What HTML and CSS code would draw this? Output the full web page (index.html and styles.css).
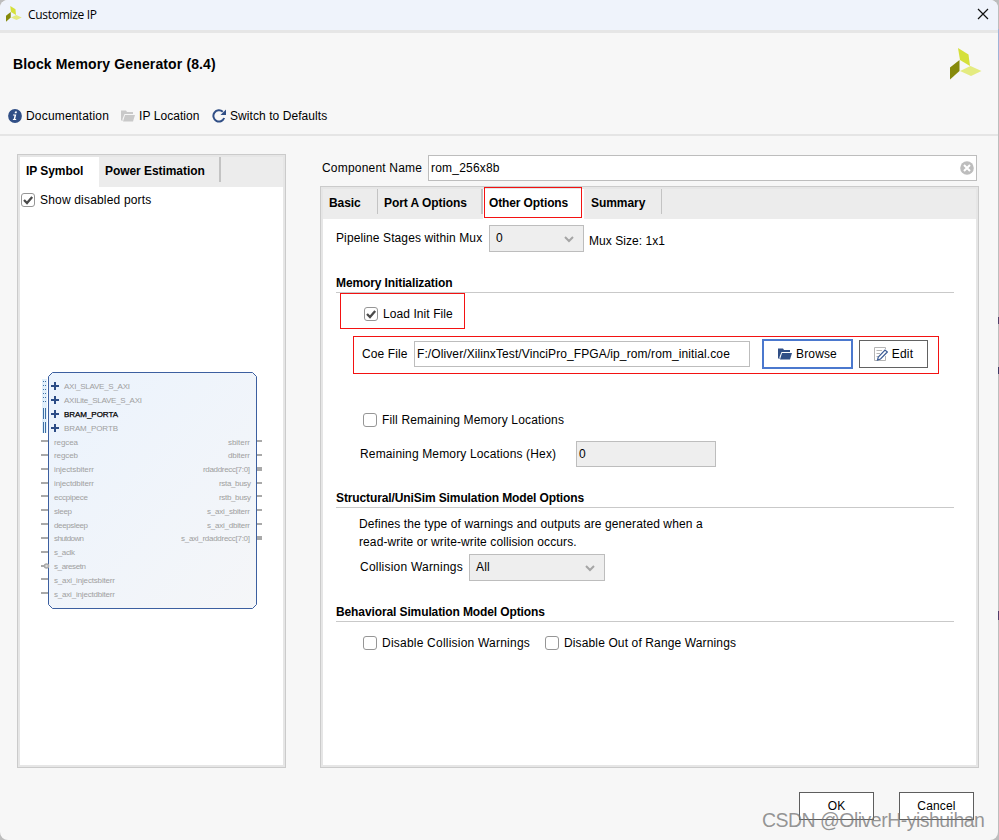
FILE: index.html
```html
<!DOCTYPE html>
<html lang="en">
<head>
<meta charset="utf-8">
<title>Customize IP</title>
<link rel="stylesheet" href="styles.css">
</head>
<body>
<div class="window">
  <header class="titlebar">
    <svg class="app-icon" viewBox="0 0 32 32"><path fill="#d5e03a" d="M8.500 0L19 6.500L20 18L10 12z"/><path fill="#868a0b" d="M0 19.500L9.500 12V23L0 31.500z"/><path fill="#e4eb80" d="M10 23L20.500 18L31.500 23L21 28z"/></svg>
    <span class="window-title">Customize IP</span>
    <svg class="close" viewBox="0 0 12 12"><path d="M1 1L11 11M11 1L1 11" stroke="#111" stroke-width="1.200" fill="none"/></svg>
  </header>
  <section class="head">
    <div class="head-top">
      <h1>Block Memory Generator (8.4)</h1>
      <svg class="logo" viewBox="0 0 32 32"><path fill="#d5e03a" d="M8 0L18.500 6.500L20 18L10 12z"/><path fill="#868a0b" d="M0 19.500L9.500 12V23L0 31.500z"/><path fill="#e4eb80" d="M10 23L20.500 18L31.500 23L21 28z"/></svg>
    </div>
    <nav class="toolbar">
      <svg class="t-info" viewBox="0 0 14 14"><circle cx="7" cy="7" r="6.900" fill="#314f86"/><path d="M7 2.500h2l-.4 1.800h-2zM5 5.500h3.300L7.200 10h1.100l-.2 1H4.800l.2-.9h.7l.8-3.600H4.900z" fill="#fff"/></svg>
      <span class="t-doc">Documentation</span>
      <svg class="t-folder" viewBox="0 0 14 12"><path fill="#c9c9c9" d="M0 .5h5l1 1.500h6v2H3.500L1.500 9V11H1L0 10zM4 5h10l-2 6.500H2z"/></svg>
      <span class="t-loc">IP Location</span>
      <svg class="t-reset" viewBox="0 0 14 14"><path d="M12.200 9A5.600 5.600 0 1 1 10.800 2.800" fill="none" stroke="#314f86" stroke-width="2"/><path fill="#314f86" d="M14 .5V6H8.500z"/></svg>
      <span>Switch to Defaults</span>
    </nav>
  </section>
  <main class="main">
    <aside class="panel side">
      <div class="tabs">
        <span class="tab side-active">IP Symbol</span><span class="tab power">Power Estimation</span>
      </div>
      <div class="show-ports"><span class="check"><svg viewBox="0 0 14 14"><path d="M3 7L6 10L11.200 4" fill="none" stroke="#4a4a4a" stroke-width="2.300"/></svg></span><span>Show disabled ports</span></div>
      <svg class="symbol" width="226" height="240" viewBox="38 370 226 240">
        <defs><linearGradient id="g" x1="0" y1="0" x2="1" y2="1"><stop offset="0" stop-color="#ebf3fd"/><stop offset="1" stop-color="#f5f6f8"/></linearGradient></defs>
        <path d="M52.500 372.500H252.500L256.500 376.500V604.500L252.500 608.500H52.500L48.500 604.500V376.500z" fill="url(#g)" stroke="#3c5fa0"/>
        <path fill="#e2f0fb" d="M42 379h5v28h-5zM42 407h5v26h-5z"/>
        <path d="M43.500 381V405M45.500 381V405" stroke="#3d6fa5" stroke-width="1" stroke-dasharray="1 3"/>
        <path d="M43.500 408V419M45.500 408V419M43.500 422V433M45.500 422V433" stroke="#3d6fa5"/>
        <path d="M51 386h8M55 382v8M51 400h8M55 396v8M51 414h8M55 410v8M51 428h8M55 424v8" stroke="#2d4d86" stroke-width="2"/>
        <path d="M41 441h7M41 455h7M41 469h7M41 483h7M41 496h7M41 510h7M41 524h7M41 538h7M41 552h7M41 566h7M41 579h7M41 593h7M257 441h5M257 455h5M257 483h5M257 496h5M257 510h5M257 524h5" stroke="#a9a9a9" stroke-width="2"/>
        <path d="M257 469h5M257 538h5" stroke="#a9a9a9" stroke-width="4"/>
        <circle cx="46.500" cy="566" r="2" fill="#ddd" stroke="#a9a9a9" stroke-width="1.500"/>
        <g class="ports">
          <text x="64" y="389" textLength="66">AXI_SLAVE_S_AXI</text><text x="64" y="403" textLength="78">AXILite_SLAVE_S_AXI</text>
          <text class="on" x="64" y="417" textLength="54">BRAM_PORTA</text><text x="64" y="431" textLength="54">BRAM_PORTB</text>
          <text x="54" y="445" textLength="24">regcea</text><text x="54" y="458" textLength="24">regceb</text>
          <text x="54" y="472" textLength="40">injectsbiterr</text><text x="54" y="486" textLength="40">injectdbiterr</text>
          <text x="54" y="500" textLength="34">eccpipece</text><text x="54" y="514" textLength="18">sleep</text>
          <text x="54" y="528" textLength="34">deepsleep</text><text x="54" y="541" textLength="30">shutdown</text>
          <text x="54" y="555" textLength="21">s_aclk</text><text x="54" y="569" textLength="32">s_aresetn</text>
          <text x="54" y="583" textLength="61">s_axi_injectsbiterr</text><text x="54" y="597" textLength="61">s_axi_injectdbiterr</text>
          <text x="228" y="445" textLength="22">sbiterr</text><text x="228" y="458" textLength="22">dbiterr</text>
          <text x="203" y="472" textLength="47">rdaddrecc[7:0]</text><text x="219" y="486" textLength="32">rsta_busy</text>
          <text x="219" y="500" textLength="32">rstb_busy</text><text x="207" y="514" textLength="43">s_axi_sbiterr</text>
          <text x="207" y="528" textLength="43">s_axi_dbiterr</text><text x="181" y="541" textLength="69">s_axi_rdaddrecc[7:0]</text>
        </g>
      </svg>
    </aside>
    <div class="config">
      <div class="name-row"><label>Component Name</label><div class="field name-field"><span>rom_256x8b</span><svg viewBox="0 0 14 14"><circle cx="7" cy="7" r="6.800" fill="#bdbdbd"/><path d="M4 4L10 10M10 4L4 10" stroke="#fff" stroke-width="2"/></svg></div></div>
      <section class="panel options">
        <div class="tabs">
          <span class="tab basic">Basic</span><span class="tab port">Port A Options</span><span class="tab other"><b>Other Options</b></span><span class="tab summary">Summary</span>
        </div>
        <div class="row pipeline"><span class="lbl">Pipeline Stages within Mux</span><div class="select mux"><span>0</span><svg viewBox="0 0 10 7"><path d="M1 1L5 5L9 1" fill="none" stroke="#a5a5a5" stroke-width="2"/></svg></div><span class="mux-size">Mux Size: 1x1</span></div>
        <h2 class="sec-memory">Memory Initialization</h2>
        <div class="mark load"><span class="check"><svg viewBox="0 0 14 14"><path d="M3 7L6 10L11.200 4" fill="none" stroke="#4a4a4a" stroke-width="2.300"/></svg></span><span>Load Init File</span></div>
        <div class="mark coe">
          <span class="lbl">Coe File</span><div class="field path">F:/Oliver/XilinxTest/VinciPro_FPGA/ip_rom/rom_initial.coe</div>
          <div class="browse"><svg viewBox="0 0 14 12"><path fill="#314f86" d="M0 .5h5l1 1.500h6v2H3.500L1.500 9V11H1L0 10zM4 5h10l-2 6.500H2z"/></svg>Browse</div>
          <div class="edit"><svg viewBox="0 0 14 14"><path d="M11.500 9V13.500H.5V.5H11.500V2M2.500 3.500H8M2.500 6.500H6M2.500 9.500H4" fill="none" stroke="#b5b5b5"/><path d="M3.500 13L4.300 10L11 3L13.300 5L6.500 12z" fill="#fff" stroke="#3d5d96" stroke-width="1.200"/></svg>Edit</div>
        </div>
        <div class="row fill"><span class="check"></span><span>Fill Remaining Memory Locations</span></div>
        <div class="row remaining"><span class="lbl">Remaining Memory Locations (Hex)</span><div class="field hex">0</div></div>
        <h2 class="sec-struct">Structural/UniSim Simulation Model Options</h2>
        <p>Defines the type of warnings and outputs are generated when a<br>read-write or write-write collision occurs.</p>
        <div class="row collision"><span class="lbl">Collision Warnings</span><div class="select all"><span>All</span><svg viewBox="0 0 10 7"><path d="M1 1L5 5L9 1" fill="none" stroke="#a5a5a5" stroke-width="2"/></svg></div></div>
        <h2 class="sec-behav">Behavioral Simulation Model Options</h2>
        <div class="row disable"><span class="check"></span><span class="dc">Disable Collision Warnings</span><span class="check"></span><span class="dr">Disable Out of Range Warnings</span></div>
      </section>
    </div>
  </main>
  <footer><div class="button">OK</div><div class="button">Cancel</div></footer>
</div>
<div class="watermark">CSDN @OliverH-yishuihan</div>
</body>
</html>
```
FILE: styles.css
```css
* { box-sizing: border-box; }
body { margin: 0; width: 999px; height: 840px; overflow: hidden; background: linear-gradient(#bdbdbd 29px, #9fb3d6 29px 60px, #bdbdbd 60px 317px, #51406b 317px 324px, #bdbdbd 324px 367px, #3f3a66 367px 374px, #bdbdbd 374px 611px, #51406b 611px 620px, #bdbdbd 620px); color: #000; font: 12px/16px "Liberation Sans", Arial, sans-serif; letter-spacing: .15px; white-space: nowrap; }
svg { display: block; flex: none; }
h1, h2, p { margin: 0; }
.window { width: 998px; height: 840px; background: #f7f7f7; border-radius: 8px; overflow: hidden; }
.titlebar { display: flex; align-items: center; height: 33px; padding: 0 9px 0 6px; background: #eff3fb; border-bottom: 3px solid #e6e6e6; }
.app-icon { width: 16px; height: 16px; margin-top: -3px; }
.window-title { margin-left: 6px; font: 12px/16px "Open Sans", sans-serif; letter-spacing: -.3px; }
.close { width: 12px; height: 12px; margin-left: auto; margin-top: -2px; }
.head { height: 103px; border-bottom: 2px solid #e5e5e5; }
.head-top { display: flex; justify-content: space-between; height: 73px; padding: 15px 16px 0 13px; }
h1 { font-size: 14px; line-height: 32px; letter-spacing: .13px; }
.logo { width: 32px; height: 32px; }
.toolbar { display: flex; align-items: center; height: 20px; padding-left: 8px; letter-spacing: .07px; }
.t-info, .t-reset { width: 14px; height: 14px; }
.t-folder { width: 14px; height: 12px; }
.t-doc { width: 95px; margin-left: 4px; letter-spacing: .18px; }
.t-loc { width: 73px; margin-left: 4px; }
.t-reset { margin-right: 4px; }
.main { display: flex; height: 632px; padding: 18px 0 0 17px; }
.panel { border: 1px solid #cbcbcb; box-shadow: inset 0 0 0 2px #e6e6e6; background: #fff; padding: 2px; }
.side { width: 269px; height: 614px; }
.tabs { display: flex; height: 30px; background: #ececec; font-weight: bold; letter-spacing: -.06px; line-height: 28px; }
.tab { position: relative; }
.side-active { width: 79px; padding-left: 6px; background: #fff; }
.power { width: 122px; padding-left: 6px; height: 25px; border-right: 2px solid #c3c3c3; }
.check { display: block; width: 14px; height: 14px; border: 1px solid #969696; border-radius: 3px; background: #fff; flex: none; }
.check svg { width: 14px; height: 14px; margin: -1px; }
.show-ports { display: flex; align-items: center; height: 26px; gap: 5px; padding-left: 1px; letter-spacing: .18px; }
.symbol { margin: 157px 0 0 18px; }
.ports { font-size: 8px; letter-spacing: 0; fill: #a0a0a0; }
.on { fill: #000; stroke: #000; stroke-width: .25px; }
.config { margin-left: 34px; width: 659px; }
.name-row { display: flex; align-items: center; height: 32px; padding: 0 2px 4px 2px; letter-spacing: .2px; }
.name-row label { width: 106px; }
.field { display: flex; align-items: center; height: 26px; border: 1px solid #bdbdbd; padding-left: 2px; background: #fff; }
.name-field { flex: 1; justify-content: space-between; padding-right: 2px; }
.name-field svg { width: 14px; height: 14px; }
.options { height: 582px; }
.options .tab { height: 25px; }
.basic { width: 55px; padding-left: 6px; border-right: 1px solid #c3c3c3; }
.port { width: 105px; padding-left: 6px; border-right: 2px solid #c3c3c3; }
.options .other { width: 101px; height: 30px; background: #fff; letter-spacing: -.12px; }
.other b { display: block; width: 98px; height: 31px; margin: -2px 0 0 1px; border: 1px solid #f31212; padding-left: 4px; line-height: 30px; }
.summary { width: 78px; padding-left: 7px; border-right: 1px solid #c3c3c3; }
.row { display: flex; align-items: center; }
.pipeline { height: 27px; margin: 6px 0 0 13px; letter-spacing: .11px; }
.pipeline .lbl { width: 153px; }
.row .lbl { margin-top: -1px; }
.select { display: flex; align-items: center; justify-content: space-between; height: 27px; border: 1px solid #bdbdbd; background: #eee; padding: 0 9px 0 6px; }
.select span { margin-top: -2px; }
.select svg { width: 10px; height: 7px; margin-top: 2px; }
.mux { width: 95px; }
.mux-size { margin: 5px 0 0 5px; letter-spacing: .05px; }
h2 { width: 618px; height: 18px; margin-left: 13px; border-bottom: 1px solid #c9c9c9; font-size: 12px; line-height: 16px; letter-spacing: -.11px; }
.sec-memory { margin-top: 23px; }
.mark { display: flex; align-items: center; border: 1px solid #f31212; }
.load { width: 125px; height: 36px; margin-left: 17px; padding: 6px 0 0 23px; gap: 5px; letter-spacing: .08px; }
.coe { width: 586px; height: 38px; margin: 7px 0 0 30px; padding: 0 0 2px 8px; }
.coe .lbl { width: 52px; letter-spacing: .1px; }
.path { width: 336px; letter-spacing: .1px; }
.browse, .edit { display: flex; align-items: center; justify-content: center; gap: 4px; }
.browse { width: 91px; height: 30px; margin-left: 12px; border: 2px solid #4b78ce; }
.browse svg { width: 14px; height: 12px; }
.edit { width: 69px; height: 28px; margin-left: 6px; border: 1px solid #626262; }
.edit svg { width: 14px; height: 14px; }
.fill { height: 16px; margin: 38px 0 0 40px; gap: 5px; }
.remaining { height: 26px; margin: 13px 0 0 37px; }
.remaining .lbl { width: 216px; margin-top: 0; }
.hex { width: 140px; background: #eee; }
.sec-struct { margin-top: 23px; }
p { margin: 7px 0 0 36px; line-height: 18px; letter-spacing: .1px; }
.collision { height: 27px; margin: 3px 0 0 37px; letter-spacing: .22px; }
.collision .lbl { width: 109px; }
.all { width: 136px; }
.sec-behav { margin-top: 23px; }
.disable { height: 16px; margin: 13px 0 0 40px; gap: 5px; }
.dc { width: 158px; letter-spacing: .22px; }
.dr { letter-spacing: .13px; }
footer { display: flex; gap: 25px; padding: 24px 0 0 799px; }
.button { width: 75px; height: 28px; border: 1px solid #5e5e5e; background: #fff; line-height: 26px; text-align: center; }
.watermark { position: absolute; left: 762px; top: 808px; font-size: 19.5px; line-height: 24px; letter-spacing: -.52px; color: rgba(115,115,115,.75); }
```
